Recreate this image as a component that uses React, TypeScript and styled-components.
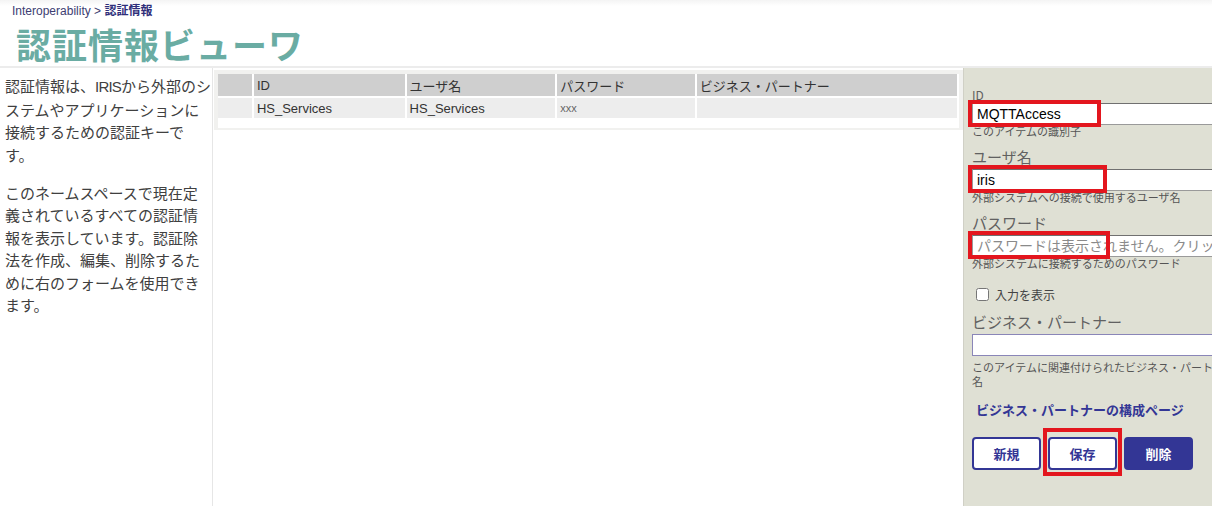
import React from 'react'
import styled, { createGlobalStyle } from 'styled-components'

const GlobalStyle = createGlobalStyle`
  html, body {
    margin: 0;
    padding: 0;
    background: #ffffff;
    font-family: "Liberation Sans", "Noto Sans CJK JP", sans-serif;
    color: #333;
  }
`

const Page = styled.div`
  display: flex;
  flex-direction: column;
  height: 100vh;
  overflow: hidden;
`

const Header = styled.header`
  height: 68px;
  border-bottom: 2px solid #ececec;
  background: linear-gradient(#f4f4f4 0px, #ffffff 6px);
  box-sizing: border-box;
  padding: 3px 0 0 12px;
`

const Crumbs = styled.div`
  font-size: 12px;
  line-height: 16px;
  color: #3d3d72;
  b {
    font-weight: 700;
    color: #2f2f7a;
  }
`

const Title = styled.h1`
  margin: 4px 0 0 4px;
  font-family: "Noto Sans CJK JP", sans-serif;
  font-size: 35px;
  line-height: 42px;
  font-weight: 700;
  color: #6aaca3;
  letter-spacing: 1px;
`

const Main = styled.div`
  flex: 1;
  display: grid;
  grid-template-columns: 212px 751px 1fr;
  min-height: 0;
`

const Intro = styled.aside`
  padding: 7px 0 0 5px;
  font-family: "Noto Sans CJK JP", sans-serif;
  font-size: 15px;
  line-height: 22.5px;
  color: #404040;
  p {
    margin: 0 0 15.5px;
  }
`

const Latin = styled.span`
  font-family: "Liberation Sans", sans-serif;
  letter-spacing: -0.8px;
`

const ListArea = styled.section`
  border-left: 1px solid #e6e6e6;
  padding: 2px 0 0 1px;
`

const Card = styled.div`
  border: 4px solid #f1f1ef;
  border-bottom-width: 2px;
  padding: 0 0 8px 0;
  width: 741px;
  background: #fff;
`

const Table = styled.table`
  border-collapse: separate;
  border-spacing: 2px;
  margin: -2px 0 0 -2px;
  font-size: 13px;
  color: #333;
  font-family: "Liberation Sans", "Noto Sans CJK JP", sans-serif;
`

const Th = styled.th<{ $w: number }>`
  width: ${p => p.$w}px;
  background: #cfcfcf;
  height: 22px;
  padding: 0 3px;
  text-align: left;
  font-weight: 400;
  box-sizing: border-box;
`

const Td = styled.td<{ $small?: boolean }>`
  background: #ededed;
  height: 20px;
  padding: 0 3px;
  font-size: ${p => (p.$small ? '11px' : '13px')};
  color: ${p => (p.$small ? '#666' : '#333')};
`

const Panel = styled.section`
  background: #dfe0d4;
  border-left: 1px solid #d0d0c6;
  padding: 19px 0 0 8px;
  overflow: hidden;
  font-family: "Noto Sans CJK JP", sans-serif;
`

const Field = styled.div<{ $gap: number }>`
  margin-top: ${p => p.$gap}px;
`

const Label = styled.div<{ $small?: boolean }>`
  font-size: ${p => (p.$small ? '12px' : '15px')};
  line-height: ${p => (p.$small ? '16px' : '20px')};
  color: #616161;
  margin-bottom: ${p => (p.$small ? '0' : '2px')};
`

const InputWrap = styled.div`
  position: relative;
`

const TextInput = styled.input<{ $purple?: boolean }>`
  display: block;
  width: 300px;
  height: 22px;
  box-sizing: border-box;
  border: 1px solid ${p => (p.$purple ? '#8a86b8' : '#9a9a9a')};
  border-top-color: ${p => (p.$purple ? '#8a86b8' : '#707070')};
  padding: 0 4px;
  font-family: "Liberation Sans", "Noto Sans CJK JP", sans-serif;
  font-size: 14px;
  color: #000;
  background: #fff;
  outline: none;
  &::placeholder {
    color: #8a8a8a;
    font-family: "Noto Sans CJK JP", sans-serif;
    font-size: 14px;
  }
`

const Hint = styled.div<{ $lh?: number; $gap?: number }>`
  font-size: 11px;
  line-height: ${p => p.$lh ?? 13}px;
  margin-top: ${p => p.$gap ?? 0}px;
  color: #555;
  width: 266px;
`

const Highlight = styled.div<{ $l: number; $t: number; $w: number; $h: number }>`
  position: absolute;
  left: ${p => p.$l}px;
  top: ${p => p.$t}px;
  width: ${p => p.$w}px;
  height: ${p => p.$h}px;
  border: 4px solid #e3161e;
  box-sizing: border-box;
  pointer-events: none;
`

const CheckRow = styled.label`
  display: flex;
  align-items: center;
  gap: 6px;
  margin: 14px 0 0 4px;
  height: 20px;
  font-size: 12px;
  color: #444;
  input {
    margin: 0;
    width: 13px;
    height: 13px;
  }
`

const LinkText = styled.a`
  display: block;
  margin: 13px 0 0 4px;
  font-size: 13px;
  line-height: 18px;
  font-weight: 700;
  color: #333695;
  text-decoration: none;
`

const Buttons = styled.div`
  display: flex;
  gap: 7px;
  margin-top: 18px;
`

const Button = styled.button<{ $primary?: boolean }>`
  position: relative;
  width: 69px;
  height: 33px;
  border: 2px solid #333695;
  border-radius: 4px;
  background: ${p => (p.$primary ? '#333695' : '#fff')};
  color: ${p => (p.$primary ? '#fff' : '#333695')};
  font-family: "Noto Sans CJK JP", sans-serif;
  font-size: 13px;
  font-weight: 700;
  padding: 0;
`

const columns = [
  { label: '', w: 34 },
  { label: 'ID', w: 151 },
  { label: 'ユーザ名', w: 149 },
  { label: 'パスワード', w: 138 },
  { label: 'ビジネス・パートナー', w: 261 },
]

export default function App() {
  return (
    <Page>
      <GlobalStyle />
      <Header>
        <Crumbs>
          Interoperability &gt; <b>認証情報</b>
        </Crumbs>
        <Title>認証情報ビューワ</Title>
      </Header>
      <Main>
        <Intro>
          <p>
            認証情報は、<Latin>IRIS</Latin>から外部のシステムやアプリケーションに接続するための認証キーです。
          </p>
          <p>このネームスペースで現在定義されているすべての認証情報を表示しています。認証除法を作成、編集、削除するために右のフォームを使用できます。</p>
        </Intro>
        <ListArea>
          <Card>
            <Table>
              <thead>
                <tr>
                  {columns.map(c => (
                    <Th key={c.label || 'sel'} $w={c.w}>
                      {c.label}
                    </Th>
                  ))}
                </tr>
              </thead>
              <tbody>
                <tr>
                  <Td />
                  <Td>HS_Services</Td>
                  <Td>HS_Services</Td>
                  <Td $small>xxx</Td>
                  <Td />
                </tr>
              </tbody>
            </Table>
          </Card>
        </ListArea>
        <Panel>
          <Field $gap={0}>
            <Label $small>ID</Label>
            <InputWrap>
              <TextInput defaultValue="MQTTAccess" />
              <Highlight $l={-4} $t={-3} $w={133} $h={27} />
            </InputWrap>
            <Hint>このアイテムの識別子</Hint>
          </Field>
          <Field $gap={9}>
            <Label>ユーザ名</Label>
            <InputWrap>
              <TextInput defaultValue="iris" />
              <Highlight $l={-4} $t={-4} $w={139} $h={28} />
            </InputWrap>
            <Hint>外部システムへの接続で使用するユーザ名</Hint>
          </Field>
          <Field $gap={9}>
            <Label>パスワード</Label>
            <InputWrap>
              <TextInput placeholder="パスワードは表示されません。クリックして変更" />
              <Highlight $l={-4} $t={-4} $w={142} $h={28} />
            </InputWrap>
            <Hint>外部システムに接続するためのパスワード</Hint>
          </Field>
          <CheckRow>
            <input type="checkbox" />
            入力を表示
          </CheckRow>
          <Field $gap={8}>
            <Label>ビジネス・パートナー</Label>
            <TextInput $purple />
            <Hint $lh={14} $gap={4}>
              このアイテムに関連付けられたビジネス・パートナー名
            </Hint>
          </Field>
          <LinkText href="#">ビジネス・パートナーの構成ページ</LinkText>
          <Buttons>
            <Button>新規</Button>
            <Button>
              保存
              <Highlight $l={-7} $t={-11} $w={79} $h={48} />
            </Button>
            <Button $primary>削除</Button>
          </Buttons>
        </Panel>
      </Main>
    </Page>
  )
}
